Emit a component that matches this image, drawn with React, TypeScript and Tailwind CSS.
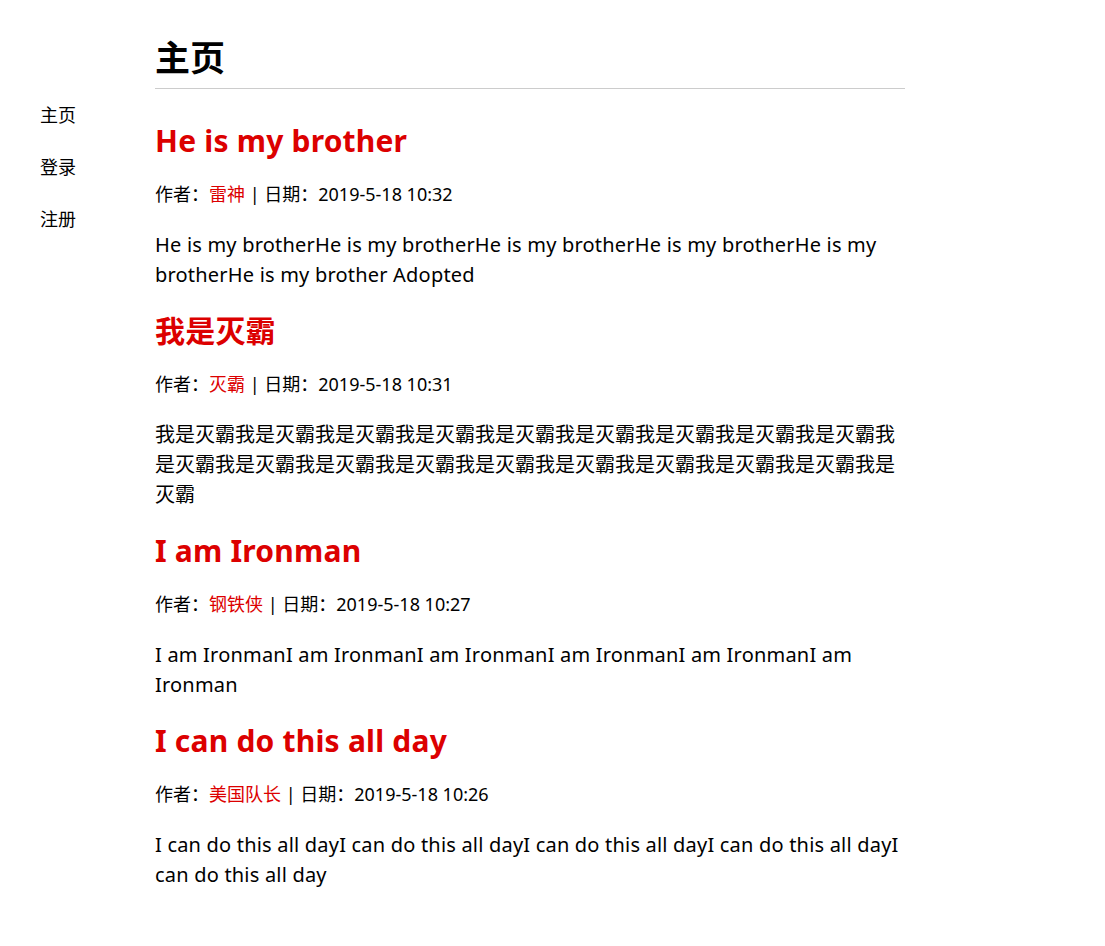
const posts = [
  {
    title: 'He is my brother',
    author: '雷神',
    date: '2019-5-18 10:32',
    body: 'He is my brotherHe is my brotherHe is my brotherHe is my brotherHe is my brotherHe is my brother Adopted',
    latin: true,
  },
  {
    title: '我是灭霸',
    author: '灭霸',
    date: '2019-5-18 10:31',
    body: '我是灭霸'.repeat(18) + '我是灭霸',
    latin: false,
  },
  {
    title: 'I am Ironman',
    author: '钢铁侠',
    date: '2019-5-18 10:27',
    body: 'I am IronmanI am IronmanI am IronmanI am IronmanI am IronmanI am Ironman',
    latin: true,
  },
  {
    title: 'I can do this all day',
    author: '美国队长',
    date: '2019-5-18 10:26',
    body: 'I can do this all dayI can do this all dayI can do this all dayI can do this all dayI can do this all day',
    latin: true,
  },
]

export default function App() {
  return (
    <div className="flex min-h-[946px] bg-white text-black font-['Noto_Sans','Noto_Sans_CJK_SC',sans-serif]">
      <nav className="w-[155px] shrink-0 pl-[40px] pt-[102px]">
        <ul className="flex flex-col gap-[25px] text-[18px] leading-[27px]">
          <li>主页</li>
          <li>登录</li>
          <li>注册</li>
        </ul>
      </nav>
      <main className="w-[750px] pt-[32px]">
        <h1 className="text-[35px] leading-[52px] font-bold border-b border-[#cccccc] pb-[4px]">主页</h1>
        <div className="pt-[29px]">
          {posts.map((p) => (
            <article key={p.title} className="mb-[18px]">
              <h2 className="text-[30px] leading-[45px] font-bold text-[#dc0000] tracking-[0.2px]">{p.title}</h2>
              <p className="mt-[18px] text-[18px] leading-[27px]">
                作者：<span className="text-[#dc0000]">{p.author}</span> | 日期：{p.date}
              </p>
              <p className={p.latin ? 'mt-[22px] text-[20px] leading-[30px] tracking-[0.2px]' : 'mt-[22px] text-[20px] leading-[30px]'}>
                {p.body}
              </p>
            </article>
          ))}
        </div>
      </main>
    </div>
  )
}
